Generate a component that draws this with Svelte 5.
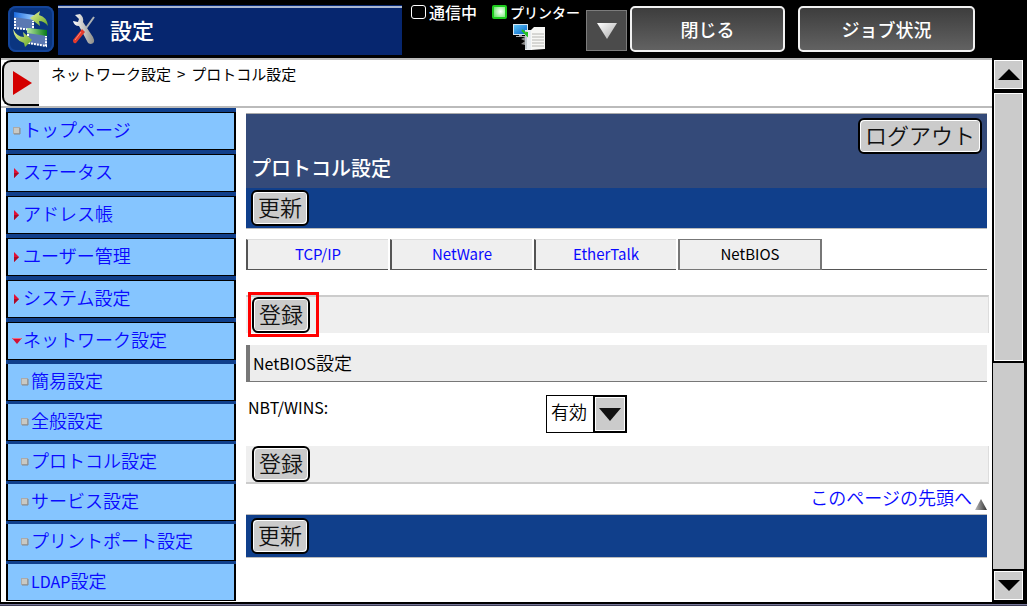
<script>
  const menu = [
    { label: 'トップページ', mark: 'dot' },
    { label: 'ステータス', mark: 'right' },
    { label: 'アドレス帳', mark: 'right' },
    { label: 'ユーザー管理', mark: 'right' },
    { label: 'システム設定', mark: 'right' },
    { label: 'ネットワーク設定', mark: 'down' },
    { label: '簡易設定', mark: 'dot', sub: true },
    { label: '全般設定', mark: 'dot', sub: true },
    { label: 'プロトコル設定', mark: 'dot', sub: true },
    { label: 'サービス設定', mark: 'dot', sub: true },
    { label: 'プリントポート設定', mark: 'dot', sub: true },
    { latin: 'LDAP', label: '設定', mark: 'dot', sub: true }
  ];
  const tabs = ['TCP/IP', 'NetWare', 'EtherTalk', 'NetBIOS'];
  let active = $state('NetBIOS');
  let nbt = $state('有効');
</script>

<svelte:head><title>プロトコル設定</title></svelte:head>

<div class="page">
  <header>
    <button class="swap" aria-label="画面切替">
      <svg width="46" height="46" viewBox="0 0 46 46">
        <defs>
          <linearGradient id="leaf" x1="0" y1="0" x2="1" y2="1">
            <stop offset="0" stop-color="#eaf29a" /><stop offset="1" stop-color="#62a824" />
          </linearGradient>
          <linearGradient id="barBlue"><stop offset="0" stop-color="#1c6be0" /><stop offset="1" stop-color="#9fd0ff" /></linearGradient>
          <linearGradient id="barGreen"><stop offset="0" stop-color="#b8e8a0" /><stop offset="1" stop-color="#087c18" /></linearGradient>
        </defs>
        <path d="M6 7 26 10V24L6 22Z" fill="#5a78b2" />
        <path d="M6 6 26 9V14L6 11Z" fill="url(#barBlue)" />
        <path d="M7 12V22L25 24V15" fill="none" stroke="#fff" stroke-width="2" stroke-dasharray="2 1" />
        <path d="M19 23 39 26V40L19 37Z" fill="#5a78b2" />
        <path d="M19 22 39 24V30L19 27Z" fill="url(#barGreen)" />
        <path d="M20 28V37L38 40V30" fill="none" stroke="#fff" stroke-width="2" stroke-dasharray="2 1" />
        <path d="M22 12 32 5 31 9Q39 11 40 20 36 15 31 15L32 20Z" fill="url(#leaf)" />
        <path d="M5 23Q9 31 16 31L15 26 24 34 17 41 16 37Q6 34 5 23Z" fill="url(#leaf)" />
      </svg>
    </button>
    <div class="title">
      <svg width="26" height="34" viewBox="0 0 26 34">
        <defs>
          <linearGradient id="steel"><stop offset="0" stop-color="#fff" /><stop offset="1" stop-color="#8d8d88" /></linearGradient>
        </defs>
        <path d="M23 4 13 18" stroke="#aeb3b5" stroke-width="2" />
        <path d="M4 2 9 1Q13 4 12 9L22 24Q25 30 20 31 17 31 16 28L8 13Q3 13 2 8L7 9 8 6Z" fill="url(#steel)" />
        <path d="M11 16 14 19 5 30Q2 31 2 27Z" fill="#e23a2c" />
        <path d="M10 19 4 27" stroke="#ff8b78" stroke-width="1" />
      </svg>
      <h1>設定</h1>
    </div>
    <div class="status">
      <div class="comm"><i class="lamp"></i>通信中</div>
      <div class="printer">
        <div class="ready"><i class="lamp on"></i>プリンター</div>
        <svg width="34" height="28" viewBox="0 0 34 28">
          <defs>
            <linearGradient id="screen" x1="0" y1="0" x2="1" y2="1"><stop offset="0" stop-color="#5cc3f5" /><stop offset="1" stop-color="#0562c8" /></linearGradient>
          </defs>
          <rect x="0" y="1" width="15" height="11" fill="#d5e4ef" />
          <rect x="1" y="2" width="13" height="9" fill="url(#screen)" />
          <path d="M6 12H9V13H12V14H3V13H6Z" fill="#aaa" />
          <path d="M8 16 12 14V18ZM8 21 12 18V22Z" fill="#888" />
          <path d="M12 7H19V27H12Z" fill="#e8edf1" />
          <path d="M13 8V26" stroke="#9aa5ad" />
          <path d="M18 7 21 4H32V26L18 27Z" fill="#f7f7f5" />
          <path d="M19 11H31M19 14H31M19 17H31M19 20H31M19 23H31" stroke="#b6b6b2" />
          <path d="M9 7 14 12V9" stroke="#22c41e" stroke-width="2" fill="none" />
        </svg>
      </div>
    </div>
    <button class="more" aria-label="状態一覧">
      <svg width="22" height="18" viewBox="0 0 22 18">
        <defs><linearGradient id="fade" x1="0" y1="0" x2="1" y2="1"><stop offset="0" stop-color="#fff" /><stop offset="1" stop-color="#aaa" /></linearGradient></defs>
        <path d="M1 1H21L11 17Z" fill="url(#fade)" />
      </svg>
    </button>
    <button class="dark close">閉じる</button>
    <button class="dark jobs">ジョブ状況</button>
  </header>

  <div class="middle">
    <div class="view">
      <div class="crumbs">
        <button class="play" aria-label="開く">
          <svg width="20" height="24" viewBox="0 0 20 24"><path d="M1 0 20 12 1 24Z" fill="#d40000" /></svg>
        </button>
        <p><span>ネットワーク設定</span><span>&gt;</span><span>プロトコル設定</span></p>
      </div>

      <div class="columns">
        <nav>
          {#each menu as item}
            <a href="#top" class:sub={item.sub}>
              {#if item.mark === 'dot'}
                <svg class="mark" width="8" height="8" viewBox="0 0 8 8"><path d="M0 0H7V7H0Z" fill="#aaa" /><path d="M1 1H6V6H1Z" fill="#c9c9c4" /><path d="M7 1V7H1" fill="none" stroke="#888" /></svg>
              {:else if item.mark === 'right'}
                <svg class="mark" width="8" height="10" viewBox="0 0 8 10"><path d="M1 0 6 5 1 10Z" fill="#e30f36" /><path d="M1 10 6 5H1Z" fill="#a80c2a" /></svg>
              {:else}
                <svg class="mark wide" width="10" height="6" viewBox="0 0 10 6"><path d="M0 0H10L5 6Z" fill="#d31034" /><path d="M0 0H10L9 1H1Z" fill="#f4647c" /></svg>
              {/if}
              <span>{#if item.latin}<span class="latin">{item.latin}</span>{/if}{item.label}</span>
            </a>
          {/each}
        </nav>

        <main id="top">
          <div class="banner">
            <button class="key logout">ログアウト</button>
            <h2>プロトコル設定</h2>
          </div>
          <div class="strip"><button class="key">更新</button></div>

          <div class="tabs">
            {#each tabs as tab}
              <button class:active={active === tab} onclick={() => (active = tab)}>{tab}</button>
            {/each}
            <i></i>
          </div>

          <div class="bar first">
            <button class="key">登録</button>
            <i class="focus"></i>
          </div>
          <h3><span class="latin">NetBIOS</span>設定</h3>
          <div class="field">
            <label class="latin" for="nbt">NBT/WINS:</label>
            <div class="drop">
              <select id="nbt" bind:value={nbt}>
                <option>有効</option>
                <option>無効</option>
              </select>
              <span class="arrow"><svg width="22" height="13" viewBox="0 0 22 13"><path d="M0 0H22L11 13Z" fill="#111" /></svg></span>
            </div>
          </div>
          <div class="bar last"><button class="key">登録</button></div>
          <div class="back">
            <a href="#top">このページの先頭へ</a>
            <svg width="12" height="11" viewBox="0 0 12 11">
              <defs><linearGradient id="cone"><stop offset="0" stop-color="#bbb" /><stop offset="1" stop-color="#333" /></linearGradient></defs>
              <path d="M6 0 12 11H0Z" fill="url(#cone)" />
            </svg>
          </div>
          <div class="strip end"><button class="key">更新</button></div>
        </main>
      </div>
    </div>

    <div class="scroll">
      <button aria-label="上へ"><svg width="22" height="11" viewBox="0 0 22 11"><path d="M11 0 22 11H0Z" /></svg></button>
      <div class="thumb"></div>
      <div class="track"></div>
      <button aria-label="下へ"><svg width="22" height="11" viewBox="0 0 22 11"><path d="M0 0H22L11 11Z" /></svg></button>
    </div>
  </div>
  <footer></footer>
</div>

<style>
  :global(body) { background: #000; }
  .page {
    min-height: 100vh;
    display: flex;
    flex-direction: column;
    background: #000;
    color: #000;
    font-family: "Noto Sans CJK JP", "Noto Sans", sans-serif;
    font-size: 18px;
    font-weight: 350;
    line-height: 24px;
  }
  .page, .page * { box-sizing: border-box; }
  button, select { font: inherit; color: inherit; padding: 0; margin: 0; cursor: pointer; }
  h1, h2, h3, p { margin: 0; font-weight: 400; }
  svg { display: block; flex: none; }
  a { text-decoration: none; color: #0a0aff; }
  .latin { font-size: 16px; font-weight: 400; }

  header { display: flex; align-items: flex-start; height: 58px; padding: 5px 52px 0 8px; color: #fff; }
  .swap { width: 46px; height: 46px; margin-top: 1px; border: 0; border-radius: 8px; background: #0a3580; box-shadow: inset 0 0 0 2px #14459a; }
  .title {
    flex: 1; height: 50px; margin-left: 4px; padding-left: 13px;
    display: flex; align-items: center; gap: 13px;
    background: linear-gradient(#06266f 0 1px, #aab7d3 1px 3px, #06266f 3px);
  }
  h1 { font-size: 22px; line-height: 30px; padding-bottom: 2px; font-weight: 500; }
  .status { display: flex; gap: 15px; margin: 0 6px 0 9px; font-weight: 500; }
  .comm, .ready { display: flex; align-items: center; gap: 3px; font-size: 16px; line-height: 16px; white-space: nowrap; }
  .comm { height: 14px; }
  .ready { font-size: 14px; height: 14px; line-height: 10px; }
  .printer svg { margin: 4px 0 0 21px; }
  .lamp { width: 15px; height: 14px; border: 1px solid #fff; border-radius: 3px; }
  .lamp.on { border: 2px solid #1dcb1d; border-radius: 2px; background: radial-gradient(circle at 60% 45%, #fff, #6be86b 90%); }
  .more {
    width: 41px; height: 41px; margin-top: 5px; display: grid; place-items: center;
    background: #4b4b4b; border: 1px solid #7c7c7c;
  }
  .dark {
    height: 46px; margin-top: 1px; border: 2px solid #f2f2f2; border-radius: 5px;
    background: linear-gradient(#3d3d3d, #626262); font-weight: 500;
  }
  .close { width: 155px; margin-left: 3px; }
  .jobs { width: 177px; margin-left: 13px; }

  .middle { flex: 1; display: flex; }
  .view { flex: 1; min-width: 0; margin-left: 1px; display: flex; flex-direction: column; background: #fff; }
  .crumbs { display: flex; height: 50px; border: solid #bbb; border-width: 2px 0; font-size: 15px; }
  .crumbs p { display: flex; gap: 6px; padding: 2px 12px; }
  .play {
    width: 37px; height: 46px; margin-left: 1px; display: grid; place-items: center;
    background: #ddd; border: 2px solid #000; border-right: 0; border-radius: 9px 0 0 9px;
  }
  .columns { flex: 1; display: flex; align-items: flex-start; gap: 10px; padding: 0 5px; }

  nav { width: 230px; padding-top: 4px; display: flex; flex-direction: column; background: #103f8b; }
  nav a {
    height: 38px; margin-bottom: 4px; padding-left: 3px; display: flex; align-items: center;
    background: #85c5ff; border: solid #000; border-width: 1px 2px;
  }
  nav a > span { padding-bottom: 4px; }
  nav .mark { margin: 0 2px; }
  nav .wide { margin: 0 1px; }
  nav a.sub { height: 37px; margin-bottom: 3px; padding-left: 11px; border-top: 0; }
  nav a.sub:last-child { margin-bottom: 0; }

  main { flex: 1; min-width: 0; padding-top: 5px; }
  .banner {
    height: 75px; padding: 4px 5px 0; border-top: 1px solid #aaa; background: #344a79; color: #fff;
    display: flex; flex-direction: column;
  }
  h2 { font-size: 20px; line-height: 28px; font-weight: 500; }
  .key {
    width: 58px; height: 36px; flex: none; padding-bottom: 4px; border: 2px solid #000; border-radius: 6px;
    background: #cbcbcb; box-shadow: inset 1px 1px #fff, inset -1px -1px #fff;
    color: #111; font-size: 22px; line-height: 28px;
  }
  .logout { width: 124px; align-self: flex-end; }
  .strip { height: 41px; padding: 2px 5px; background: #103f8b; border-bottom: 1px solid #bbb; }
  .strip.end { height: 44px; padding-top: 3px; border-top: 1px solid #bbb; }

  .tabs { display: flex; gap: 2px; height: 31px; margin-top: 10px; font-size: 15px; }
  .tabs button {
    width: 142px; padding-bottom: 2px; background: #efefef; color: #0a0aff; line-height: 24px; font-weight: 400;
    border: solid #555; border-width: 1px 0 1px 2px; border-top-color: #ddd;
  }
  .tabs .active { width: 144px; color: #000; border: solid #777; border-width: 1px 2px; }
  .tabs i { flex: 1; margin-left: -2px; border-bottom: 1px solid #555; }

  .bar { position: relative; height: 38px; margin-right: -2px; padding-left: 6px; background: #efefef; border-right: 1px solid #ddd; }
  .first { margin-top: 25px; border-top: 2px solid #ccc; }
  .last { border-bottom: 2px solid #ccc; }
  .focus { position: absolute; left: 2px; top: -5px; width: 71px; height: 45px; border: 3px solid #f00; pointer-events: none; }
  h3 {
    height: 37px; margin-top: 12px; padding: 4px 3px; background: #ededed;
    border-left: 4px solid #777; border-bottom: 1px solid #777;
    font-size: 18px; line-height: 26px; font-weight: 350;
  }
  .field { display: grid; grid-template-columns: 298px 1fr; height: 64px; padding: 13px 0 0 2px; }
  .drop { display: grid; grid-template-columns: 47px 34px; height: 38px; }
  select {
    grid-area: 1 / 1 / 2 / 3; appearance: none; border: 1px solid #000; border-radius: 0;
    background: #fff; padding: 0 36px 6px 4px;
  }
  .arrow {
    grid-area: 1 / 2; z-index: 1; display: grid; place-items: center; pointer-events: none;
    background: #cbcbcb; border: 2px solid #000; box-shadow: inset 0 0 0 1px #fff;
  }
  .back { display: flex; justify-content: flex-end; align-items: center; gap: 3px; height: 30px; }
  .back a { padding-bottom: 4px; }
  .back svg { margin-top: 10px; }

  .scroll { width: 35px; padding: 2px 4px 2px 2px; display: flex; flex-direction: column; background: #000; }
  .scroll button {
    height: 29px; display: grid; place-items: center; flex: none;
    background: #cbcbcb; border: 1px solid #fff;
  }
  .thumb { flex: 267; margin-top: 4px; background: #cbcbcb; border: 1px solid #fff; }
  .track { flex: 207; margin: 2px -1px; background: #cbcbcb; }
  footer { height: 4px; border-top: 2px solid #000; background: linear-gradient(#77779a 50%, #3d3d55 50%); }
</style>
